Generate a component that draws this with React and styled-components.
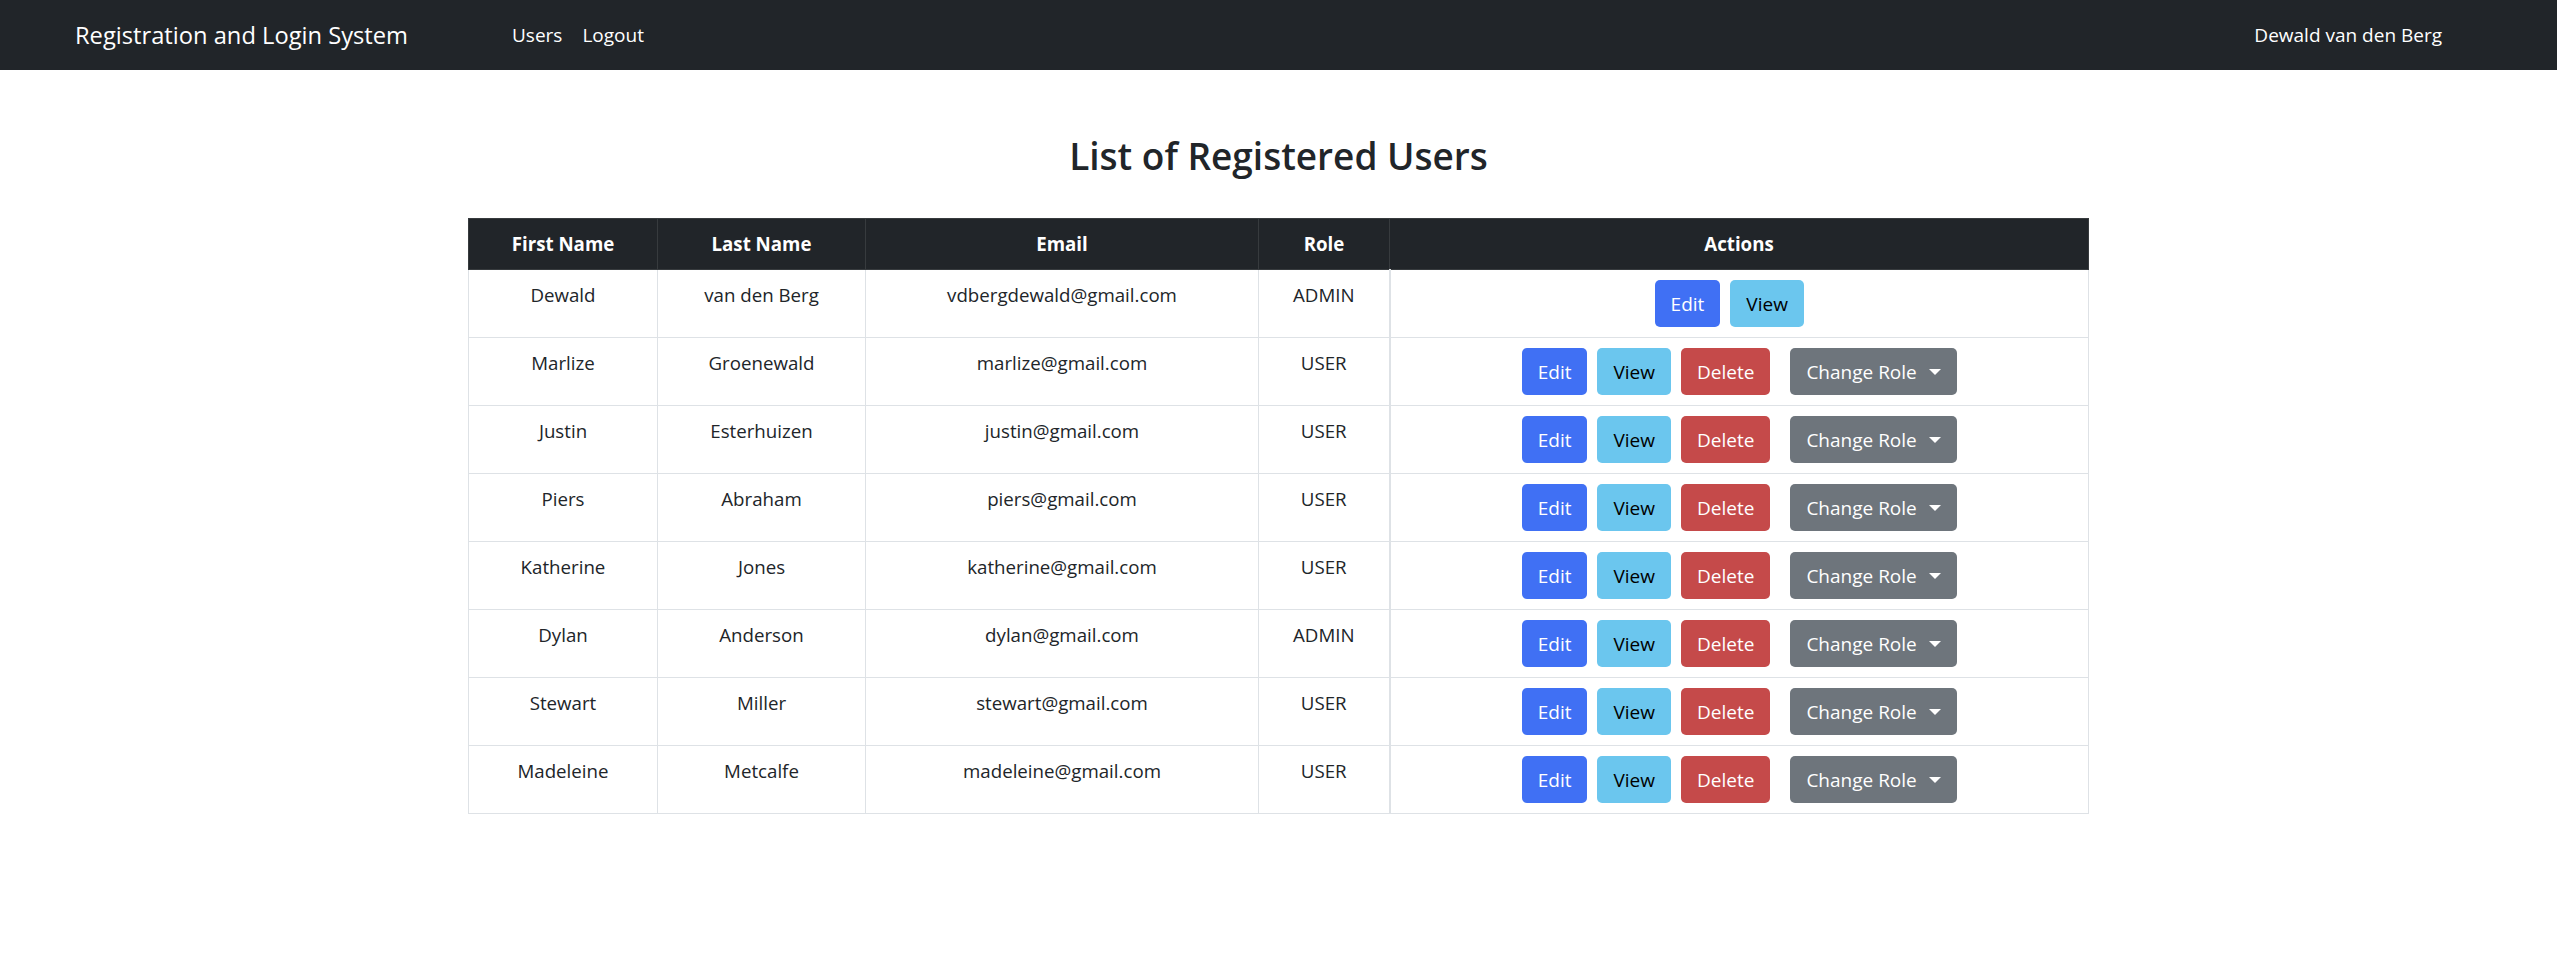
import React from 'react';
import styled, { createGlobalStyle } from 'styled-components';

const users = [
  { first: 'Dewald', last: 'van den Berg', email: 'vdbergdewald@gmail.com', role: 'ADMIN', self: true },
  { first: 'Marlize', last: 'Groenewald', email: 'marlize@gmail.com', role: 'USER' },
  { first: 'Justin', last: 'Esterhuizen', email: 'justin@gmail.com', role: 'USER' },
  { first: 'Piers', last: 'Abraham', email: 'piers@gmail.com', role: 'USER' },
  { first: 'Katherine', last: 'Jones', email: 'katherine@gmail.com', role: 'USER' },
  { first: 'Dylan', last: 'Anderson', email: 'dylan@gmail.com', role: 'ADMIN' },
  { first: 'Stewart', last: 'Miller', email: 'stewart@gmail.com', role: 'USER' },
  { first: 'Madeleine', last: 'Metcalfe', email: 'madeleine@gmail.com', role: 'USER' },
];

const columns = [
  { label: 'First Name', width: 189 },
  { label: 'Last Name', width: 208 },
  { label: 'Email', width: 393 },
  { label: 'Role', width: 131 },
  { label: 'Actions', width: 699 },
];

const GlobalStyle = createGlobalStyle`
  body {
    margin: 0;
    font-family: "Open Sans", "Noto Sans", sans-serif;
    font-size: 20px;
    color: #212529;
    background: #fff;
  }
`;

function App() {
  return (
    <>
      <GlobalStyle />
      <Navbar>
        <Brand>Registration and Login System</Brand>
        <NavLinks>
          <NavLink>Users</NavLink>
          <NavLink>Logout</NavLink>
        </NavLinks>
        <UserName>Dewald van den Berg</UserName>
      </Navbar>
      <Main>
        <Title>List of Registered Users</Title>
        <Table>
          <colgroup>
            {columns.map((c) => (
              <col key={c.label} style={{ width: c.width }} />
            ))}
          </colgroup>
          <thead>
            <tr>
              {columns.map((c) => (
                <Th key={c.label}>{c.label}</Th>
              ))}
            </tr>
          </thead>
          <tbody>
            {users.map((u) => (
              <tr key={u.email}>
                <Td>{u.first}</Td>
                <Td>{u.last}</Td>
                <Td>{u.email}</Td>
                <Td>{u.role}</Td>
                <ActionCell>
                  <Actions $short={u.self}>
                    <Button $variant="primary">Edit</Button>
                    <Button $variant="info">View</Button>
                    {!u.self && (
                      <>
                        <Button $variant="danger">Delete</Button>
                        <DropdownButton $variant="secondary">Change Role</DropdownButton>
                      </>
                    )}
                  </Actions>
                </ActionCell>
              </tr>
            ))}
          </tbody>
        </Table>
      </Main>
    </>
  );
}

const Navbar = styled.nav`
  display: flex;
  align-items: center;
  height: 70px;
  padding: 0 115px 0 75px;
  background: #212529;
  color: #fff;
`;

const Brand = styled.a`
  width: 427px;
  font-size: 23.7px;
  line-height: 36px;
  white-space: nowrap;
`;

const NavLinks = styled.div`
  display: flex;
  flex: 1;
`;

const NavLink = styled.a`
  padding: 0 10px;
  font-size: 19px;
  line-height: 30px;
`;

const UserName = styled.span`
  font-size: 19px;
  line-height: 30px;
`;

const Main = styled.main`
  display: flex;
  flex-direction: column;
  align-items: center;
`;

const Title = styled.h2`
  margin: 62px 0 38px;
  font-size: 37px;
  font-weight: 600;
  line-height: 48px;
`;

const Table = styled.table`
  width: 1620px;
  table-layout: fixed;
  border-collapse: collapse;
  font-size: 18.7px;
  line-height: 30px;
`;

const Th = styled.th`
  padding: 10px;
  background: #212529;
  color: #fff;
  font-weight: 700;
  text-align: center;
  border: 1px solid #373b3e;
`;

const Td = styled.td`
  padding: 10px;
  text-align: center;
  vertical-align: top;
  border: 1px solid #dee2e6;
  height: 47px;
`;

const ActionCell = styled(Td)`
  border-left-width: 2px;
`;

const Actions = styled.div`
  display: flex;
  justify-content: center;
  gap: 10px;
  padding-right: ${(p) => (p.$short ? '20px' : '0')};
`;

const palette = {
  primary: { bg: '#4070f4', fg: '#fff' },
  info: { bg: '#6bc6ee', fg: '#000' },
  danger: { bg: '#c54a4a', fg: '#fff' },
  secondary: { bg: '#6e757c', fg: '#fff' },
};

const Button = styled.button`
  height: 47px;
  padding: 0 16px;
  border: none;
  border-radius: 5px;
  background: ${(p) => palette[p.$variant].bg};
  color: ${(p) => palette[p.$variant].fg};
  font-family: inherit;
  font-size: 19px;
  line-height: 30px;
  white-space: nowrap;
`;

const DropdownButton = styled(Button)`
  margin-left: 10px;
  display: flex;
  align-items: center;

  &::after {
    content: '';
    margin-left: 12px;
    border-top: 6px solid currentColor;
    border-left: 6px solid transparent;
    border-right: 6px solid transparent;
  }
`;

export default App;
